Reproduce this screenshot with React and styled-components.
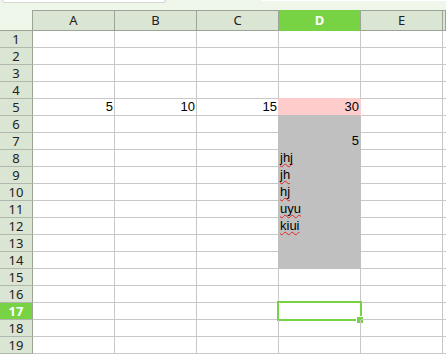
import styled, { createGlobalStyle, css } from 'styled-components'

const GlobalStyle = createGlobalStyle`
    html, body {
        margin: 0;
        padding: 0;
        background: #ffffff;
    }
`

const COLS = ['A', 'B', 'C', 'D', 'E', '']
const ROWS = 19
const ACTIVE_COL = 'D'
const ACTIVE_ROW = 17

const PINK = '#ffcccc'
const GRAY = '#c0c0c0'

// cell contents, keyed by address
const data = {
    A5: { value: '5', num: true },
    B5: { value: '10', num: true },
    C5: { value: '15', num: true },
    D5: { value: '30', num: true, bg: PINK },
    D7: { value: '5', num: true },
    D8: { value: 'jhj', typo: true },
    D9: { value: 'jh', typo: true },
    D10: { value: 'hj', typo: true },
    D11: { value: 'uyu', typo: true },
    D12: { value: 'kiui', typo: true },
}
for (let r = 6; r <= 14; r++) {
    data[`D${r}`] = { ...(data[`D${r}`] || {}), bg: GRAY }
}

function App() {
    const rows = []
    for (let r = 1; r <= ROWS; r++) {
        rows.push(
            <RowHead key={`h${r}`} $active={r === ACTIVE_ROW}>{r}</RowHead>
        )
        COLS.forEach((c, i) => {
            const cell = data[`${c}${r}`] || {}
            const selected = c === ACTIVE_COL && r === ACTIVE_ROW
            rows.push(
                <Cell key={`${c}${r}`} $bg={cell.bg} $num={cell.num} $last={i === COLS.length - 1}>
                    {cell.typo ? <Typo>{cell.value}</Typo> : cell.value}
                    {selected && (
                        <>
                            <Cursor />
                            <Handle />
                        </>
                    )}
                </Cell>
            )
        })
    }

    return (
        <>
            <GlobalStyle />
            <Page>
                <TopStrip>
                    <Tab />
                    <Gap />
                    <Edge />
                </TopStrip>
                <Sheet>
                    <Corner />
                    {COLS.map((c) => (
                        <ColHead key={c || 'F'} $active={c === ACTIVE_COL}>{c}</ColHead>
                    ))}
                    {rows}
                </Sheet>
            </Page>
        </>
    )
}

const Page = styled.div`
    width: 446px;
    height: 354px;
    overflow: hidden;
    background: #ffffff;
`

const TopStrip = styled.div`
    height: 10px;
    background: #eef7e9;
    display: flex;
    align-items: flex-start;
`

const Tab = styled.div`
    margin-left: 2px;
    width: 162px;
    height: 2px;
    background: #ffffff;
    border: 1px solid #d3d8d0;
    border-top: none;
    border-radius: 0 0 5px 5px;
`

const Gap = styled.div`
    width: 96px;
`

const Edge = styled.div`
    flex: 1;
    height: 1px;
    background: #ffffff;
`

const Sheet = styled.div`
    display: grid;
    grid-template-columns: 33px repeat(5, 82px) 1fr;
    grid-template-rows: 21px;
    grid-auto-rows: 17px;
    font-family: "Liberation Sans", Arial, sans-serif;
    font-size: 13px;
    color: #000000;
`

const Corner = styled.div`
    background: #eef7e9;
    border-right: 1px solid #9aa598;
    border-bottom: 1px solid #9aa598;
`

const headText = css`
    font-family: "Noto Sans", "DejaVu Sans", sans-serif;
    font-size: 13px;
    display: flex;
    align-items: center;
    justify-content: center;
    color: ${(p) => (p.$active ? '#ffffff' : '#222222')};
    background: ${(p) => (p.$active ? '#77d344' : '#dbe5d3')};
`

const ColHead = styled.div`
    ${headText}
    border-top: 1px solid #9aa598;
    border-bottom: 1px solid #9aa598;
    border-right: 1px solid #9aa598;
    line-height: 19px;
    ${(p) => p.$active && css`
        font-weight: bold;
        border-top-color: #77d344;
        border-bottom-color: #77d344;
    `}
`

const RowHead = styled.div`
    ${headText}
    border-right: 1px solid #9aa598;
    border-bottom: 1px solid #b0b8ae;
    line-height: 16px;
    ${(p) => p.$active && css`
        font-weight: bold;
    `}
`

const Cell = styled.div`
    position: relative;
    box-sizing: border-box;
    border-bottom: 1px solid #c8c8c8;
    border-right: ${(p) => (p.$last ? 'none' : '1px solid #c8c8c8')};
    line-height: 16px;
    white-space: nowrap;
    text-align: ${(p) => (p.$num ? 'right' : 'left')};
    padding: ${(p) => (p.$num ? '0 1px 0 0' : '0 0 0 1px')};
    ${(p) => p.$bg && css`
        background: ${p.$bg};
        border-bottom-color: ${p.$bg};
        border-right-color: ${p.$bg};
        box-shadow: -1px -1px 0 0 ${p.$bg};
    `}
`

/* spell-check squiggle, lifted above the next row's fill */
const Typo = styled.span`
    position: relative;
    z-index: 1;
    text-decoration: underline wavy #e52222;
    text-decoration-thickness: 1px;
    text-underline-offset: 1px;
    text-decoration-skip-ink: none;
`

const Cursor = styled.div`
    position: absolute;
    left: -2px;
    top: -2px;
    right: -2px;
    bottom: -2px;
    border: 2px solid #77d344;
`

const Handle = styled.div`
    position: absolute;
    right: -3px;
    bottom: -4px;
    width: 6px;
    height: 6px;
    background: #77d344;
    border-left: 1px solid #ffffff;
    border-top: 1px solid #ffffff;
`

export default App
